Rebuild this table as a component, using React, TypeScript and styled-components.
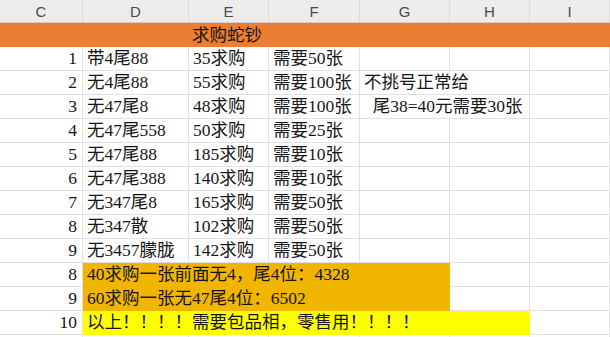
import styled, { createGlobalStyle } from "styled-components";

const COLS = "83px 106px 80px 91px 90px 80px 80px";
const GRID = "#E1E1E1";

const GlobalStyle = createGlobalStyle`
  html, body {
    margin: 0;
    padding: 0;
    background: #fff;
    overflow: hidden;
  }
`;

const Sheet = styled.div`
  width: 610px;
  height: 337px;
  overflow: hidden;
  background: #fff;
  font-family: "Liberation Serif", "Noto Sans CJK SC", serif;
  font-size: 17.5px;
  color: #161616;
`;

const HeaderRow = styled.div`
  display: grid;
  grid-template-columns: ${COLS};
  height: 23px;
  background: #ececec;
  border-bottom: 1px solid #cfcfcf;
  box-sizing: border-box;
`;

const HeaderCell = styled.div`
  display: flex;
  align-items: center;
  justify-content: center;
  border-right: 1px solid #dadada;
  font-family: "Liberation Sans", "Noto Sans", sans-serif;
  font-size: 15px;
  color: #4a4a4a;
`;

const TitleRow = styled.div`
  display: grid;
  grid-template-columns: ${COLS};
  height: 24px;
  background: #ed7d31;
`;

const Row = styled.div`
  display: grid;
  grid-template-columns: ${COLS};
  height: 24px;
`;

const Cell = styled.div<{ $span?: number; $fill?: string; $right?: boolean }>`
  grid-column: span ${(p) => p.$span ?? 1};
  box-sizing: border-box;
  height: 24px;
  line-height: 23px;
  padding: 0 4px;
  white-space: pre;
  overflow: visible;
  text-align: ${(p) => (p.$right ? "right" : "left")};
  padding-right: ${(p) => (p.$right ? "5px" : "4px")};
  background: ${(p) => p.$fill ?? "transparent"};
  border-right: 1px solid ${(p) => p.$fill ?? GRID};
  border-bottom: 1px solid ${(p) => p.$fill ?? GRID};
`;

const TitleCell = styled.div<{ $span?: number }>`
  grid-column: span ${(p) => p.$span ?? 1};
  line-height: 24px;
  padding-left: 3px;
  white-space: nowrap;
`;

type Item = { n: string; d: string; e: string; f: string; g?: string };

const items: Item[] = [
  { n: "1", d: "带4尾88", e: "35求购", f: "需要50张" },
  { n: "2", d: "无4尾88", e: "55求购", f: "需要100张", g: "不挑号正常给" },
  { n: "3", d: "无47尾8", e: "48求购", f: "需要100张", g: "  尾38=40元需要30张" },
  { n: "4", d: "无47尾558", e: "50求购", f: "需要25张" },
  { n: "5", d: "无47尾88", e: "185求购", f: "需要10张" },
  { n: "6", d: "无47尾388", e: "140求购", f: "需要10张" },
  { n: "7", d: "无347尾8", e: "165求购", f: "需要50张" },
  { n: "8", d: "无347散", e: "102求购", f: "需要50张" },
  { n: "9", d: "无3457朦胧", e: "142求购", f: "需要50张" },
];

const notes = [
  { n: "8", text: "40求购一张前面无4，尾4位：4328", span: 4, fill: "#f1b500" },
  { n: "9", text: "60求购一张无47尾4位：6502", span: 4, fill: "#f1b500" },
  { n: "10", text: "以上！！！！需要包品相，零售用！！！！", span: 5, fill: "#ffff00" },
];

function App() {
  return (
    <Sheet>
      <GlobalStyle />
      <HeaderRow>
        {["C", "D", "E", "F", "G", "H", "I"].map((c) => (
          <HeaderCell key={c}>{c}</HeaderCell>
        ))}
      </HeaderRow>
      <TitleRow>
        <TitleCell $span={2} />
        <TitleCell>求购蛇钞</TitleCell>
      </TitleRow>
      {items.map((it) => (
        <Row key={it.n}>
          <Cell $right>{it.n}</Cell>
          <Cell>{it.d}</Cell>
          <Cell>{it.e}</Cell>
          <Cell>{it.f}</Cell>
          {it.g ? (
            <Cell $span={2}>{it.g}</Cell>
          ) : (
            <>
              <Cell />
              <Cell />
            </>
          )}
          <Cell />
        </Row>
      ))}
      {notes.map((nt) => (
        <Row key={nt.text}>
          <Cell $right>{nt.n}</Cell>
          <Cell $span={nt.span} $fill={nt.fill}>
            {nt.text}
          </Cell>
          {Array.from({ length: 6 - nt.span }).map((_, i) => (
            <Cell key={i} />
          ))}
        </Row>
      ))}
      <Row>
        {Array.from({ length: 7 }).map((_, i) => (
          <Cell key={i} />
        ))}
      </Row>
    </Sheet>
  );
}

export default App;
